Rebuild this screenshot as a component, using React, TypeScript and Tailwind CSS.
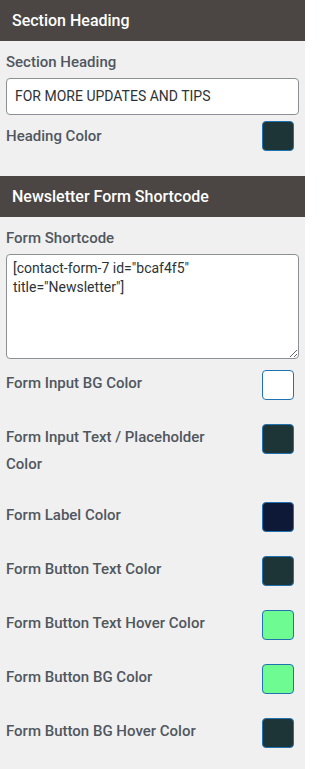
import React from 'react';

const colorRows: { label: React.ReactNode; color: string }[] = [
  { label: 'Form Input BG Color', color: '#ffffff' },
  { label: 'Form Input Text / Placeholder Color', color: '#1d3536' },
  { label: 'Form Label Color', color: '#0e1937' },
  { label: 'Form Button Text Color', color: '#1d3536' },
  { label: 'Form Button Text Hover Color', color: '#6dfb92' },
  { label: 'Form Button BG Color', color: '#6dfb92' },
  { label: 'Form Button BG Hover Color', color: '#1d3536' },
];

const Swatch = ({ color }: { color: string }) => (
  <div
    className="w-[32px] h-[30px] shrink-0 rounded-[4px] border border-[#2271b1]"
    style={{ backgroundColor: color }}
  />
);

const Header = ({ title }: { title: string }) => (
  <div className="h-[41px] bg-[#4b4644] px-3 flex items-center text-white text-[16px] font-medium">
    {title}
  </div>
);

export default function App() {
  return (
    <div
      className="w-[305px] min-h-[769px] bg-[#f0f0f1] text-[#50575e]"
      style={{ fontFamily: 'Roboto, "Liberation Sans", sans-serif' }}
    >
      {/* Section heading */}
      <Header title="Section Heading" />
      <div className="px-[6px] pt-[10px]">
        <div className="text-[15px] font-medium leading-[22px]">Section Heading</div>
        <div className="mt-[5px] h-[37px] bg-white border border-[#8c8f94] rounded-[4px] flex items-center px-2 text-[14px] text-[#2c3338]">
          FOR MORE UPDATES AND TIPS
        </div>
        <div className="mt-[6px] flex items-center justify-between pr-[5px]">
          <span className="text-[15px] font-medium">Heading Color</span>
          <Swatch color="#1d3536" />
        </div>
      </div>

      {/* Newsletter */}
      <div className="mt-[25px]">
        <Header title="Newsletter Form Shortcode" />
      </div>
      <div className="px-[6px] pt-[10px]">
        <div className="text-[15px] font-medium leading-[22px]">Form Shortcode</div>
        <textarea
          readOnly
          className="mt-[5px] block w-full h-[105px] bg-white border border-[#8c8f94] rounded-[4px] px-[6px] py-[4px] text-[14px] leading-[19px] text-[#2c3338] resize-y outline-none"
          defaultValue={'[contact-form-7 id="bcaf4f5" title="Newsletter"]'}
        />
        <div className="mt-[11px] flex flex-col gap-[24px] pr-[5px]">
          {colorRows.map((row, i) => (
            <div key={i} className="flex items-start justify-between">
              <span className="text-[15px] font-medium leading-[27px] max-w-[215px]">{row.label}</span>
              <Swatch color={row.color} />
            </div>
          ))}
        </div>
      </div>
    </div>
  );
}
